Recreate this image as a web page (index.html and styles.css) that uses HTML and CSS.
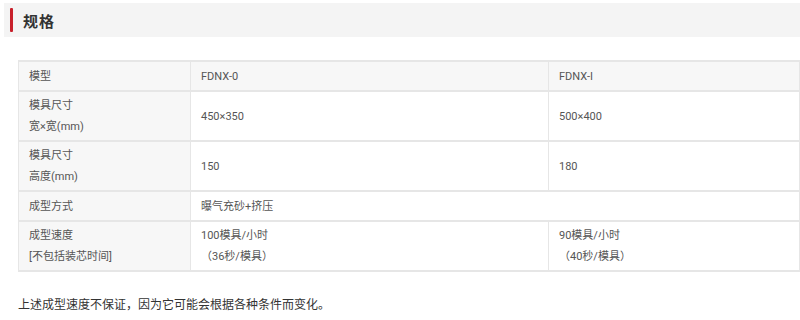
FILE: index.html
```
<!DOCTYPE html>
<html lang="zh">
<head>
<meta charset="utf-8">
<link rel="stylesheet" href="styles.css">
</head>
<body>
<div class="page">
  <div class="section-title"><span class="mark"></span><h2>规格</h2></div>
  <div class="content">
    <table class="spec">
      <colgroup><col class="c1"><col class="c2"><col class="c3"></colgroup>
      <tr class="head"><th>模型</th><td>FDNX-0</td><td>FDNX-I</td></tr>
      <tr class="tall"><th>模具尺寸<br>宽×宽(mm)</th><td>450×350</td><td>500×400</td></tr>
      <tr class="tall"><th>模具尺寸<br>高度(mm)</th><td>150</td><td>180</td></tr>
      <tr><th>成型方式</th><td colspan="2">曝气充砂+挤压</td></tr>
      <tr class="tall"><th>成型速度<br>[不包括装芯时间]</th><td>100模具/小时<br><span class="paren">（36秒/模具）</span></td><td>90模具/小时<br><span class="paren">（40秒/模具）</span></td></tr>
    </table>
    <p class="note">上述成型速度不保证，因为它可能会根据各种条件而变化。</p>
  </div>
</div>
</body>
</html>
```
FILE: styles.css
```
html, body { margin: 0; padding: 0; background: #fff; overflow: hidden; }
body { font-family: Roboto, "Noto Sans CJK SC", sans-serif; color: #555; }
.page { padding: 3px 0 0 4px; width: 796px; }
.section-title {
  display: flex; align-items: center; gap: 10px;
  background: #f4f4f4; height: 34px; padding-left: 6px;
}
.mark { width: 3px; height: 24px; background: #c8202b; border-radius: 1px; }
.section-title h2 { margin: 0; font-size: 15px; font-weight: 700; color: #333; letter-spacing: 1px; }
.content { padding: 23px 0 0 14px; }
.spec { border-collapse: collapse; width: 782px; font-size: 11px; }
.spec .c1 { width: 172px; }
.spec .c2 { width: 358px; }
.spec th, .spec td {
  border: 1px solid #e6e6e6; border-width: 2px 1px;
  text-align: left; font-weight: 400; padding: 3px 10px; line-height: 21px;
  vertical-align: middle;
}
.spec tr { height: 30px; }
.spec th { background: #f7f7f7; color: #555; }
.spec tr.head td { background: #f7f7f7; }
.spec tr.tall { height: 50px; }
.paren { font-family: Roboto, "Noto Sans CJK TC", sans-serif; }
.note { margin: 23px 0 0; font-size: 12px; color: #333; }
```
